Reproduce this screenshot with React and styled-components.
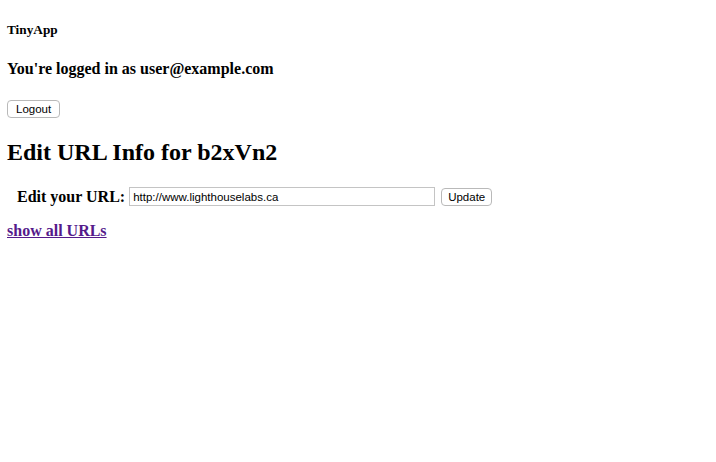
import React from 'react';
import styled, { createGlobalStyle } from 'styled-components';

const GlobalStyle = createGlobalStyle`
  body {
    margin: 0;
    padding: 0 7px;
    background: #fff;
    color: #000;
    font-family: 'Liberation Serif', 'Times New Roman', serif;
  }
`;

const Page = styled.div`
  padding-top: 1px;
`;

const Brand = styled.h5`
  font-size: 13.28px;
  font-weight: bold;
  margin: 20.5px 0 22px;
`;

const Greeting = styled.h4`
  font-size: 16px;
  font-weight: bold;
  margin: 0 0 21px;
`;

const Button = styled.button`
  background: #fff;
  border: 1px solid #b9b9b9;
  border-radius: 4px;
  height: 18px;
  padding: 0 ${({ $pad }) => $pad || 8}px;
  font-family: 'Liberation Sans', Arial, sans-serif;
  font-size: 11.5px;
  line-height: 16px;
  color: #000;
  cursor: pointer;
`;

const Title = styled.h2`
  font-size: 24px;
  font-weight: bold;
  margin: 21px 0 20px;
`;

const EditForm = styled.form`
  display: flex;
  align-items: center;
  gap: 4px;
  padding-left: 10px;
  height: 22px;
`;

const Label = styled.label`
  font-size: 16px;
  font-weight: bold;
`;

const UrlInput = styled.input`
  box-sizing: border-box;
  width: 306px;
  height: 19px;
  border: 1px solid #c4c4c4;
  padding: 0 3px;
  font-family: 'Liberation Sans', Arial, sans-serif;
  font-size: 11.5px;
  color: #000;
  margin-right: 2px;
`;

const BackLink = styled.a`
  display: inline-block;
  margin-top: 14px;
  font-size: 16px;
  font-weight: bold;
  color: #551a8b;
  text-decoration: underline;
`;

export default function App() {
  return (
    <Page>
      <GlobalStyle />
      <Brand>TinyApp</Brand>
      <Greeting>You're logged in as user@example.com</Greeting>
      <form onSubmit={(e) => e.preventDefault()}>
        <Button type="submit">Logout</Button>
      </form>
      <Title>Edit URL Info for b2xVn2</Title>
      <EditForm onSubmit={(e) => e.preventDefault()}>
        <Label htmlFor="longURL">Edit your URL:</Label>
        <UrlInput id="longURL" type="text" defaultValue="http://www.lighthouselabs.ca" />
        <Button type="submit" $pad={6}>Update</Button>
      </EditForm>
      <BackLink href="#urls">show all URLs</BackLink>
    </Page>
  );
}
